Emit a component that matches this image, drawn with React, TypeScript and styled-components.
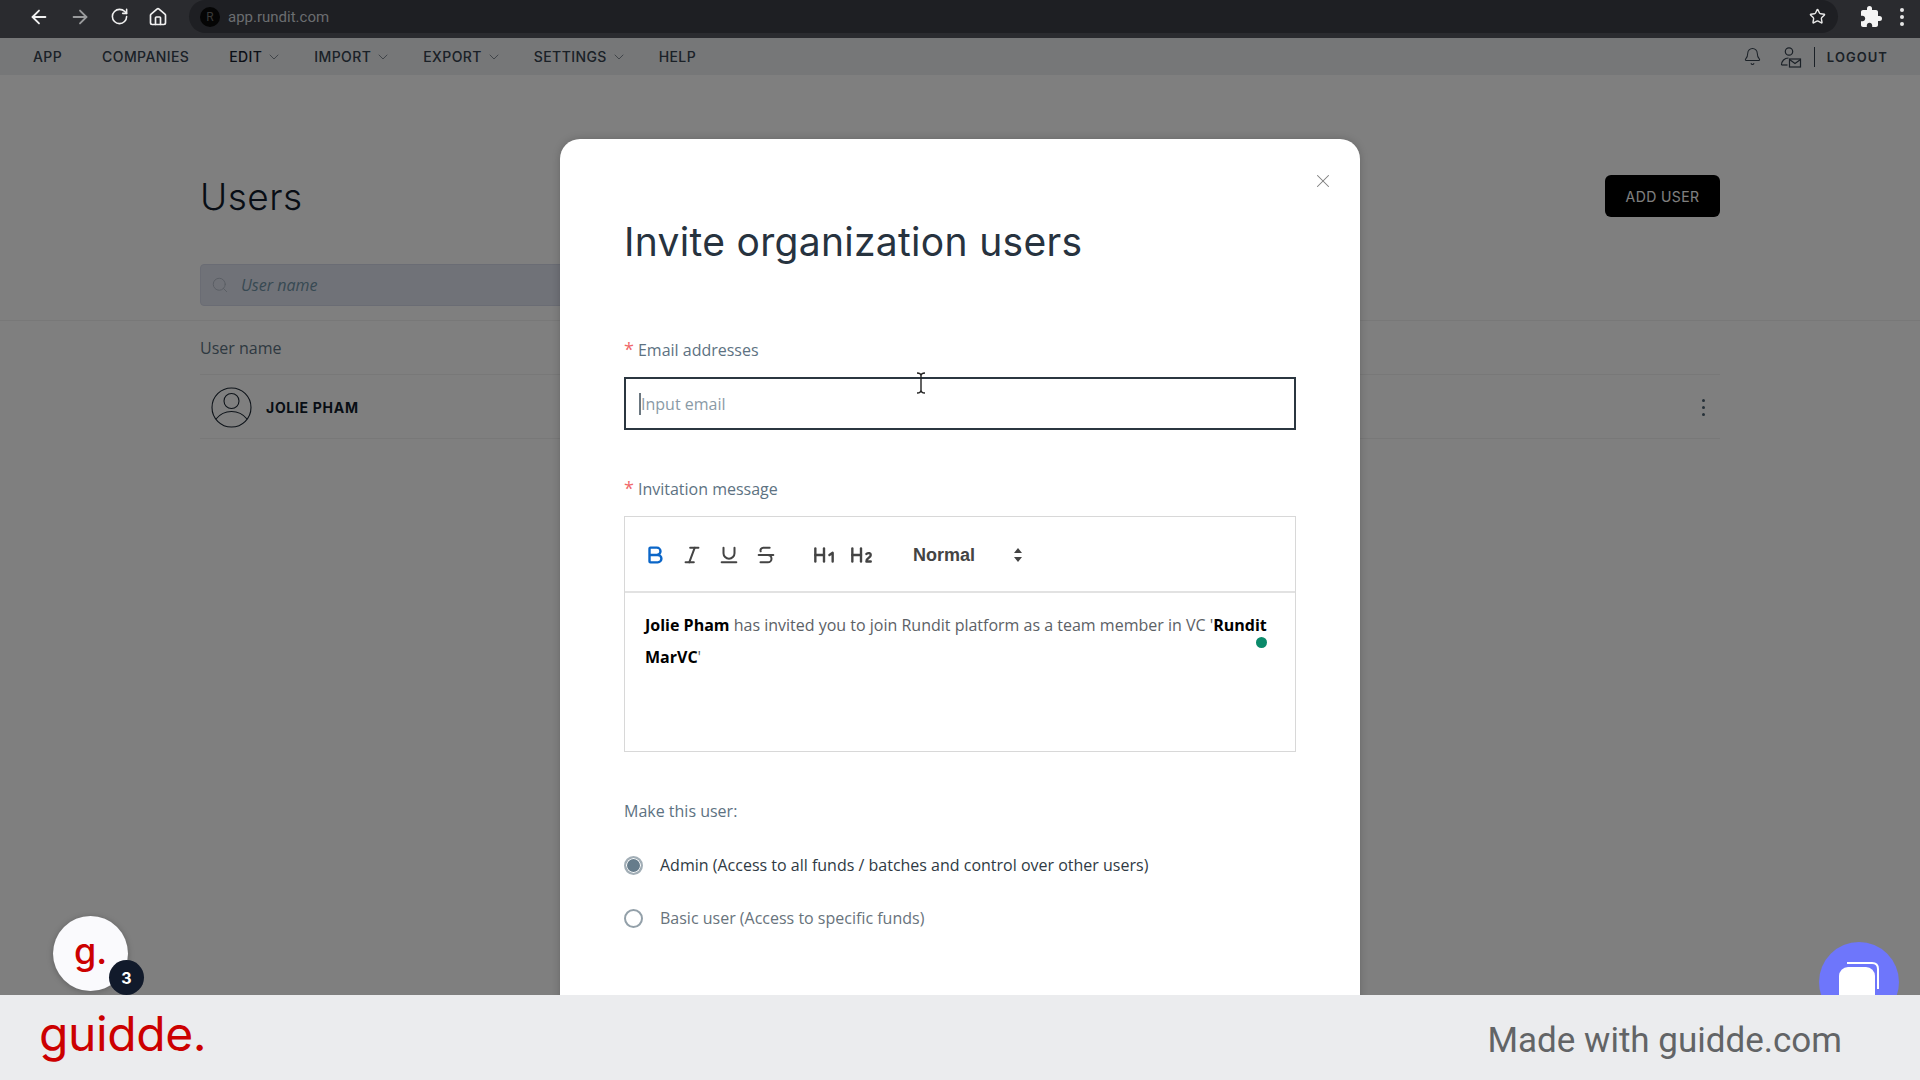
import styled, { createGlobalStyle } from "styled-components";
import {
  ArrowLeft,
  ArrowRight,
  RotateCw,
  Home,
  Star,
  ChevronDown,
  Bell,
  Search,
  X,
  Bold,
  Italic,
  Underline,
  Strikethrough,
  Heading1,
  Heading2,
} from "lucide-react";
import { MdExtension } from "react-icons/md";

const GlobalStyle = createGlobalStyle`
  html, body {
    margin: 0;
    height: 100%;
    overflow: hidden;
    background: #fff;
  }
  * {
    box-sizing: border-box;
  }
`;

const Screen = styled.div`
  width: 1920px;
  height: 1080px;
  display: flex;
  flex-direction: column;
  font-family: "Open Sans", "Liberation Sans", sans-serif;
`;

/* browser chrome */
const BrowserBar = styled.div`
  height: 38px;
  flex: none;
  display: flex;
  align-items: center;
  background: #2a2b2f;
  padding: 0 0 5px 28px;
`;

const BrowserIcons = styled.div`
  display: flex;
  align-items: center;
  gap: 19px;
  color: #f1f1f1;
`;

const AddressBar = styled.div`
  flex: 1;
  height: 33px;
  margin: 0 21px 0 21px;
  border-radius: 17px;
  background: #1e1f23;
  display: flex;
  align-items: center;
  padding: 0 12px 0 11px;
  color: #6b6d70;
  font-family: "Roboto", sans-serif;
  font-size: 15px;
`;

const SiteIcon = styled.span`
  width: 20px;
  height: 20px;
  border-radius: 50%;
  background: #050505;
  color: #3a3a3a;
  font-size: 12px;
  display: flex;
  align-items: center;
  justify-content: center;
  margin-right: 8px;
`;

const BarEnd = styled.div`
  margin-left: auto;
  display: flex;
  color: #e8e8e8;
`;

const BrowserEnd = styled.div`
  display: flex;
  align-items: center;
  gap: 17px;
  color: #f4f4f4;
  width: 61px;
`;

const ChromeDots = styled.span`
  display: flex;
  flex-direction: column;
  gap: 3px;
  i {
    width: 4px;
    height: 4px;
    border-radius: 50%;
    background: #e6e6e6;
  }
`;

/* app page, sits under the overlay */
const Workspace = styled.div`
  position: relative;
  flex: 1;
  overflow: hidden;
  background: #fff;
`;

const NavBar = styled.nav`
  height: 37px;
  display: flex;
  align-items: center;
  padding: 0 32px 0 33px;
  background: #eceef1;
`;

const NavItem = styled.span<{ $active?: boolean; $menu?: boolean }>`
  display: flex;
  align-items: center;
  gap: 4px;
  margin-right: ${(p) => (p.$menu ? 32 : 40)}px;
  font-family: "Inter", sans-serif;
  font-size: 14px;
  font-weight: 500;
  letter-spacing: 0.4px;
  color: ${(p) => (p.$active ? "#16202e" : "#36424e")};
  svg {
    color: #5b6670;
  }
`;

const NavEnd = styled.div`
  margin-left: auto;
  display: flex;
  align-items: center;
  color: #36424e;
`;

const NavDivider = styled.span`
  width: 1px;
  height: 20px;
  background: #36424e;
  margin: 0 12px 0 12px;
`;

const MailUser = styled.svg`
  margin-left: 18px;
`;

const Logout = styled.span`
  font-family: "Inter", sans-serif;
  font-size: 13px;
  font-weight: 600;
  letter-spacing: 1.05px;
`;

const Page = styled.main`
  padding: 0 200px;
`;

const PageHeader = styled.div`
  height: 42px;
  margin-top: 100px;
  display: flex;
  align-items: center;
  justify-content: space-between;
`;

const PageTitle = styled.h1`
  margin: 0;
  font-family: "Inter", sans-serif;
  font-size: 37px;
  font-weight: 300;
  letter-spacing: 0.5px;
  color: #101b2a;
`;

const AddUser = styled.button`
  width: 115px;
  height: 42px;
  border: 0;
  border-radius: 6px;
  background: #000;
  color: #fff;
  font-family: "Inter", sans-serif;
  font-size: 14px;
  letter-spacing: 0.4px;
`;

const SearchBox = styled.div`
  width: 420px;
  height: 42px;
  margin-top: 47px;
  border-radius: 4px;
  background: #e1e4f0;
  border: 1px solid #d4d9e8;
  display: flex;
  align-items: center;
  gap: 12px;
  padding: 0 10px;
  color: #b4bcc8;
`;

const SearchText = styled.span`
  color: #6f93a6;
  font-size: 16px;
  font-style: italic;
`;

const TableHead = styled.div`
  margin: 14px -200px 0;
  padding: 0 200px;
  border-top: 1px solid #f0f0f0;
`;

const HeadLabel = styled.div`
  height: 54px;
  display: flex;
  align-items: center;
  border-bottom: 1px solid #f0f0f0;
  font-size: 16px;
  color: #5d7282;
`;

const UserRow = styled.div`
  height: 64px;
  display: flex;
  align-items: center;
  padding: 1px 15px 0 11px;
  border-bottom: 1px solid #f0f0f0;
`;

const UserName = styled.span`
  margin-left: 14px;
  font-family: "Inter", sans-serif;
  font-size: 14px;
  font-weight: 700;
  letter-spacing: 0.7px;
  color: #101b2a;
`;

const Kebab = styled.span`
  margin-left: auto;
  display: flex;
  flex-direction: column;
  gap: 4px;
  i {
    width: 3px;
    height: 3px;
    border-radius: 50%;
    background: #4d6372;
  }
`;

const Overlay = styled.div`
  position: absolute;
  inset: 0;
  background: rgba(0, 0, 0, 0.5);
`;

/* modal */
const Modal = styled.section`
  position: absolute;
  left: 560px;
  top: 101px;
  width: 800px;
  height: 1000px;
  padding: 80px 64px 0;
  background: #fff;
  border-radius: 20px;
  box-shadow: 0 0 8px rgba(0, 0, 0, 0.2);
`;

const CloseButton = styled.span`
  position: absolute;
  top: 31px;
  right: 26px;
  color: #7d7d7d;
  display: flex;
`;

const ModalTitle = styled.h2`
  margin: 0;
  height: 46px;
  line-height: 46px;
  font-family: "Inter", sans-serif;
  font-size: 39px;
  font-weight: 400;
  letter-spacing: 0.3px;
  color: #27333f;
`;

const FieldLabel = styled.div<{ $gap: number }>`
  margin-top: ${(p) => p.$gap}px;
  height: 22px;
  line-height: 22px;
  font-size: 16px;
  color: #5d7282;
`;

const Required = styled.span`
  color: #f0686a;
  font-size: 18px;
  line-height: 1;
  margin-right: 4px;
`;

const EmailInput = styled.div`
  position: relative;
  margin-top: 16px;
  height: 53px;
  border: 2px solid #2b3640;
  display: flex;
  align-items: center;
  padding-left: 13px;
  font-size: 16px;
  color: #8a9aa6;
`;

const Caret = styled.span`
  width: 2px;
  height: 22px;
  background: #6b7780;
`;

const TextCursor = styled.svg`
  position: absolute;
  left: 288px;
  top: -7px;
`;

const Editor = styled.div`
  position: relative;
  margin-top: 16px;
  height: 236px;
  border: 1px solid #d8d8d8;
`;

const EditorToolbar = styled.div`
  height: 76px;
  display: flex;
  align-items: center;
  padding: 2px 0 0 19px;
  border-bottom: 2px solid #e2e2e2;
  color: #444;
`;

const ToolButton = styled.span<{ $active?: boolean; $gap?: number }>`
  display: flex;
  margin-right: ${(p) => p.$gap ?? 15}px;
  color: ${(p) => (p.$active ? "#0b66c8" : "#444")};
`;

const FormatPicker = styled.span`
  display: flex;
  align-items: center;
  width: 110px;
  justify-content: space-between;
  margin-left: 39px;
  font-family: "Liberation Sans", sans-serif;
  font-size: 18px;
  font-weight: 700;
  color: #444;
`;

const Sorter = styled.svg`
  color: #444;
`;

const EditorBody = styled.div`
  padding: 16px 20px;
  font-size: 16px;
  line-height: 32px;
  color: #5c6166;
  b {
    color: #000;
    font-weight: 700;
  }
`;

const GreenDot = styled.span`
  position: absolute;
  left: 631px;
  top: 120px;
  width: 11px;
  height: 11px;
  border-radius: 50%;
  background: #0b8a6a;
`;

const RadioList = styled.div`
  margin-top: 31px;
  display: flex;
  flex-direction: column;
  gap: 29px;
`;

const RadioRow = styled.label<{ $on?: boolean }>`
  height: 24px;
  display: flex;
  align-items: center;
  gap: 17px;
  font-size: 16px;
  color: ${(p) => (p.$on ? "#2f3a44" : "#68737c")};
`;

const RadioDot = styled.span<{ $on?: boolean }>`
  width: 19px;
  height: 19px;
  border-radius: 50%;
  border: 2px solid ${(p) => (p.$on ? "#a2aeb6" : "#93a0a9")};
  background: ${(p) => (p.$on ? "#667c8b" : "#fff")};
  box-shadow: ${(p) => (p.$on ? "inset 0 0 0 1px #fff" : "none")};
`;

/* launchers on top of the overlay */
const GuiddeBubble = styled.div`
  position: absolute;
  left: 53px;
  top: 878px;
  width: 75px;
  height: 75px;
  border-radius: 50%;
  background: #fafafd;
  box-shadow: 0 1px 6px rgba(0, 0, 0, 0.25);
  display: flex;
  align-items: center;
  justify-content: center;
  padding-bottom: 6px;
  font-family: "Inter", sans-serif;
  font-size: 36px;
  font-weight: 500;
  color: #cc0000;
`;

const Badge = styled.span`
  position: absolute;
  right: -16px;
  bottom: -4px;
  width: 35px;
  height: 35px;
  border-radius: 50%;
  background: #111a2b;
  color: #fff;
  font-size: 16px;
  font-weight: 700;
  display: flex;
  align-items: center;
  justify-content: center;
`;

const ChatBubble = styled.div`
  position: absolute;
  left: 1819px;
  top: 904px;
  width: 80px;
  height: 80px;
  border-radius: 50%;
  background: #6e76fb;
  display: flex;
  justify-content: center;
  padding-top: 18px;
`;

/* footer strip */
const Footer = styled.footer`
  height: 85px;
  flex: none;
  position: relative;
  display: flex;
  align-items: center;
  justify-content: space-between;
  padding: 0 78px 0 39px;
  background: #ebecee;
`;

const FooterLogo = styled.span`
  font-family: "Inter", sans-serif;
  font-size: 48px;
  font-weight: 400;
  letter-spacing: -0.4px;
  color: #cc0000;
  margin-top: -8px;
`;

const FooterText = styled.span`
  font-family: "Roboto", sans-serif;
  font-size: 35px;
  color: #626466;
  margin-top: 5px;
`;

function Dots({ as: Wrap }: { as: typeof Kebab | typeof ChromeDots }) {
  return (
    <Wrap>
      <i />
      <i />
      <i />
    </Wrap>
  );
}

function NavMenu({ label, active, menu }: { label: string; active?: boolean; menu?: boolean }) {
  return (
    <NavItem $active={active} $menu={menu}>
      {label}
      {menu && <ChevronDown size={16} strokeWidth={1.1} />}
    </NavItem>
  );
}

export default function App() {
  return (
    <Screen>
      <GlobalStyle />
      <BrowserBar>
        <BrowserIcons>
          <ArrowLeft size={22} strokeWidth={2} />
          <ArrowRight size={22} strokeWidth={2} color="#9a9b9d" />
          <RotateCw size={19} strokeWidth={2} />
          <Home size={20} strokeWidth={2} />
        </BrowserIcons>
        <AddressBar>
          <SiteIcon>R</SiteIcon>
          app.rundit.com
          <BarEnd>
            <Star size={17} strokeWidth={2} />
          </BarEnd>
        </AddressBar>
        <BrowserEnd>
          <MdExtension size={24} />
          <Dots as={ChromeDots} />
        </BrowserEnd>
      </BrowserBar>

      <Workspace>
        <NavBar>
          <NavMenu label="APP" />
          <NavMenu label="COMPANIES" />
          <NavMenu label="EDIT" active menu />
          <NavMenu label="IMPORT" menu />
          <NavMenu label="EXPORT" menu />
          <NavMenu label="SETTINGS" menu />
          <NavMenu label="HELP" />
          <NavEnd>
            <Bell size={19} strokeWidth={1.3} />
            <MailUser width="22" height="22" viewBox="0 0 22 22" fill="none" stroke="currentColor" strokeWidth="1.2">
              <circle cx="9" cy="5.5" r="3.7" />
              <path d="M1.5 19c0-4 3-7 7-7" />
              <path d="M1.5 19h6" />
              <rect x="9.5" y="13" width="11" height="8" />
              <path d="M9.5 13.5l5.5 4 5.5-4" />
            </MailUser>
            <NavDivider />
            <Logout>LOGOUT</Logout>
          </NavEnd>
        </NavBar>

        <Page>
          <PageHeader>
            <PageTitle>Users</PageTitle>
            <AddUser>ADD USER</AddUser>
          </PageHeader>
          <SearchBox>
            <Search size={18} strokeWidth={1.3} />
            <SearchText>User name</SearchText>
          </SearchBox>
          <TableHead>
            <HeadLabel>User name</HeadLabel>
          </TableHead>
          <UserRow>
            <svg width="41" height="41" viewBox="0 0 41 41" fill="none" stroke="#1b2632" strokeWidth="1.1">
              <circle cx="20.5" cy="20.5" r="19.5" />
              <circle cx="20.5" cy="14" r="7.5" />
              <path d="M5 32c4-5 10-7.5 15.5-7.5S32 27 36 32" />
            </svg>
            <UserName>JOLIE PHAM</UserName>
            <Dots as={Kebab} />
          </UserRow>
        </Page>

        <Overlay />

        <Modal>
          <CloseButton>
            <X size={22} strokeWidth={1.1} />
          </CloseButton>
          <ModalTitle>Invite organization users</ModalTitle>

          <FieldLabel $gap={74}>
            <Required>*</Required>Email addresses
          </FieldLabel>
          <EmailInput>
            <Caret />
            Input email
            <TextCursor width="14" height="22" viewBox="0 0 14 22" fill="none" stroke="#222" strokeWidth="1.4">
              <path d="M3 1c2 0 4 1 4 3v14c0 2 2 3 4 3M11 1c-2 0-4 1-4 3v14c0 2-2 3-4 3" />
            </TextCursor>
          </EmailInput>

          <FieldLabel $gap={48}>
            <Required>*</Required>Invitation message
          </FieldLabel>
          <Editor>
            <EditorToolbar>
              <ToolButton $active>
                <Bold size={22} strokeWidth={2.6} />
              </ToolButton>
              <ToolButton>
                <Italic size={22} strokeWidth={2.2} />
              </ToolButton>
              <ToolButton>
                <Underline size={22} strokeWidth={2.2} />
              </ToolButton>
              <ToolButton $gap={34}>
                <Strikethrough size={22} strokeWidth={2.2} />
              </ToolButton>
              <ToolButton $gap={11}>
                <Heading1 size={26} strokeWidth={2.2} />
              </ToolButton>
              <ToolButton $gap={0}>
                <Heading2 size={26} strokeWidth={2.2} />
              </ToolButton>
              <FormatPicker>
                Normal
                <Sorter width="10" height="16" viewBox="0 0 10 16" fill="currentColor">
                  <path d="M5 1l4 5H1zM5 15l4-5H1z" />
                </Sorter>
              </FormatPicker>
            </EditorToolbar>
            <EditorBody>
              <b>Jolie Pham</b> has invited you to join Rundit platform as a team member in VC '<b>Rundit</b> <b>MarVC</b>'
            </EditorBody>
            <GreenDot />
          </Editor>

          <FieldLabel $gap={48}>Make this user:</FieldLabel>
          <RadioList>
            <RadioRow $on>
              <RadioDot $on />
              Admin (Access to all funds / batches and control over other users)
            </RadioRow>
            <RadioRow>
              <RadioDot />
              Basic user (Access to specific funds)
            </RadioRow>
          </RadioList>
        </Modal>

        <GuiddeBubble>
          g.
          <Badge>3</Badge>
        </GuiddeBubble>
        <ChatBubble>
          <svg width="44" height="44" viewBox="0 0 44 44" fill="#fff">
            <rect x="2" y="7" width="36" height="36" rx="9" />
            <path d="M10 3h25c4 0 6 2 6 6v20" fill="none" stroke="#fff" strokeWidth="2" />
          </svg>
        </ChatBubble>
      </Workspace>

      <Footer>
        <FooterLogo>guidde.</FooterLogo>
        <FooterText>Made with guidde.com</FooterText>
      </Footer>
    </Screen>
  );
}
